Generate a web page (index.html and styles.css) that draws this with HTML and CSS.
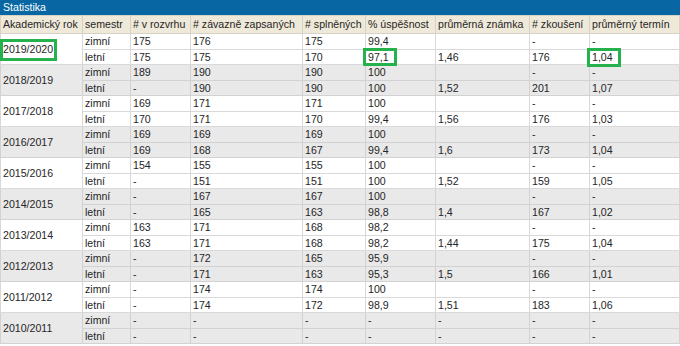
FILE: index.html
```html
<!DOCTYPE html>
<html lang="cs">
<head>
<meta charset="utf-8">
<title>Statistika</title>
<link rel="stylesheet" href="styles.css">
</head>
<body>
<div class="panel">
  <div class="title">Statistika</div>
  <table class="stats">
    <colgroup>
      <col class="c-year"><col class="c-sem"><col class="c-a"><col class="c-b"><col class="c-c"><col class="c-d"><col class="c-e"><col class="c-f"><col class="c-g">
    </colgroup>
    <thead>
      <tr><th>Akademický rok</th><th>semestr</th><th># v rozvrhu</th><th># závazně zapsaných</th><th># splněných</th><th>% úspěšnost</th><th>průměrná známka</th><th># zkoušení</th><th>průměrný termín</th></tr>
    </thead>
    <tbody class="g-white">
      <tr><td rowspan="2" class="year">2019/2020</td><td>zimní</td><td>175</td><td>176</td><td>175</td><td>99,4</td><td></td><td>-</td><td>-</td></tr>
      <tr><td>letní</td><td>175</td><td>175</td><td>170</td><td>97,1</td><td>1,46</td><td>176</td><td>1,04</td></tr>
    </tbody>
    <tbody class="g-gray">
      <tr><td rowspan="2" class="year">2018/2019</td><td>zimní</td><td>189</td><td>190</td><td>190</td><td>100</td><td></td><td>-</td><td>-</td></tr>
      <tr><td>letní</td><td>-</td><td>190</td><td>190</td><td>100</td><td>1,52</td><td>201</td><td>1,07</td></tr>
    </tbody>
    <tbody class="g-white">
      <tr><td rowspan="2" class="year">2017/2018</td><td>zimní</td><td>169</td><td>171</td><td>171</td><td>100</td><td></td><td>-</td><td>-</td></tr>
      <tr><td>letní</td><td>170</td><td>171</td><td>170</td><td>99,4</td><td>1,56</td><td>176</td><td>1,03</td></tr>
    </tbody>
    <tbody class="g-gray">
      <tr><td rowspan="2" class="year">2016/2017</td><td>zimní</td><td>169</td><td>169</td><td>169</td><td>100</td><td></td><td>-</td><td>-</td></tr>
      <tr><td>letní</td><td>169</td><td>168</td><td>167</td><td>99,4</td><td>1,6</td><td>173</td><td>1,04</td></tr>
    </tbody>
    <tbody class="g-white">
      <tr><td rowspan="2" class="year">2015/2016</td><td>zimní</td><td>154</td><td>155</td><td>155</td><td>100</td><td></td><td>-</td><td>-</td></tr>
      <tr><td>letní</td><td>-</td><td>151</td><td>151</td><td>100</td><td>1,52</td><td>159</td><td>1,05</td></tr>
    </tbody>
    <tbody class="g-gray">
      <tr><td rowspan="2" class="year">2014/2015</td><td>zimní</td><td>-</td><td>167</td><td>167</td><td>100</td><td></td><td>-</td><td>-</td></tr>
      <tr><td>letní</td><td>-</td><td>165</td><td>163</td><td>98,8</td><td>1,4</td><td>167</td><td>1,02</td></tr>
    </tbody>
    <tbody class="g-white">
      <tr><td rowspan="2" class="year">2013/2014</td><td>zimní</td><td>163</td><td>171</td><td>168</td><td>98,2</td><td></td><td>-</td><td>-</td></tr>
      <tr><td>letní</td><td>163</td><td>171</td><td>168</td><td>98,2</td><td>1,44</td><td>175</td><td>1,04</td></tr>
    </tbody>
    <tbody class="g-gray">
      <tr><td rowspan="2" class="year">2012/2013</td><td>zimní</td><td>-</td><td>172</td><td>165</td><td>95,9</td><td></td><td>-</td><td>-</td></tr>
      <tr><td>letní</td><td>-</td><td>171</td><td>163</td><td>95,3</td><td>1,5</td><td>166</td><td>1,01</td></tr>
    </tbody>
    <tbody class="g-white">
      <tr><td rowspan="2" class="year">2011/2012</td><td>zimní</td><td>-</td><td>174</td><td>174</td><td>100</td><td></td><td>-</td><td>-</td></tr>
      <tr><td>letní</td><td>-</td><td>174</td><td>172</td><td>98,9</td><td>1,51</td><td>183</td><td>1,06</td></tr>
    </tbody>
    <tbody class="g-gray">
      <tr><td rowspan="2" class="year">2010/2011</td><td>zimní</td><td>-</td><td>-</td><td>-</td><td>-</td><td>-</td><td>-</td><td>-</td></tr>
      <tr><td>letní</td><td>-</td><td>-</td><td>-</td><td>-</td><td>-</td><td>-</td><td>-</td></tr>
    </tbody>
  </table>
  <div class="mark mark-year"></div>
  <div class="mark mark-rate"></div>
  <div class="mark mark-term"></div>
</div>
</body>
</html>
```

FILE: styles.css
```css
html, body {
  margin: 0;
  padding: 0;
  background: #ffffff;
}

body {
  font-family: "Liberation Sans", Arial, sans-serif;
  font-size: 10.6px;
  color: #262626;
}

.panel {
  position: relative;
  width: 680px;
}

.title {
  height: 15px;
  line-height: 15px;
  padding-left: 3px;
  background: #0866a2;
  color: #ffffff;
  border-bottom: 0;
}

.stats {
  width: 679px;
  table-layout: fixed;
  border-collapse: collapse;
}

.c-year { width: 82px; }
.c-sem { width: 48px; }
.c-a { width: 60px; }
.c-b { width: 112px; }
.c-c { width: 63px; }
.c-d { width: 70px; }
.c-e { width: 94px; }
.c-f { width: 60px; }
.c-g { width: 90px; }

.stats th {
  background: #efe9d9;
  font-weight: normal;
  text-align: left;
  line-height: 15px;
  padding: 1px 2px;
  border: 1px solid #d6d2c6;
  white-space: nowrap;
  overflow: hidden;
}

.stats td {
  line-height: 12.5px;
  padding: 1px 2px;
  border: 1px solid #d9d9d9;
  white-space: nowrap;
  text-align: left;
}

.stats td.year {
  vertical-align: middle;
}

.g-white td {
  background: #ffffff;
}

.g-gray td {
  background: #e9e9e9;
}

.g-gray td {
  border-color: #d2d2d2;
}

.mark {
  position: absolute;
  border: 3px solid #25b14b;
  box-sizing: border-box;
}

.mark-year {
  left: 0;
  top: 39px;
  width: 57px;
  height: 22px;
}

.mark-rate {
  left: 363px;
  top: 48px;
  width: 34px;
  height: 18px;
}

.mark-term {
  left: 587px;
  top: 48px;
  width: 34px;
  height: 19px;
}
```
